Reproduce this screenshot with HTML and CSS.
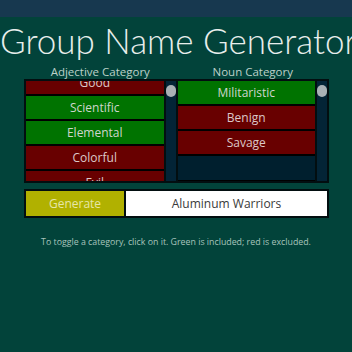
FILE: index.html
```html
<!DOCTYPE html>
<html lang="en-US">
<head>
<title>Group Name Generator</title>
<link rel="stylesheet" href="styles.css">
</head>
<body>
<div class="topbar"></div>

<h1 class="title">Group Name Generator</h1>

<div class="labels">
  <div class="label">Adjective Category</div>
  <div class="label">Noun Category</div>
</div>

<div class="panel">
  <div class="col">
    <div class="list">
      <div class="items scrolled">
        <div class="item off">Good</div>
        <div class="item on">Scientific</div>
        <div class="item on">Elemental</div>
        <div class="item off">Colorful</div>
        <div class="item off">Evil</div>
      </div>
    </div>
    <div class="bar"><div class="thumb"></div></div>
  </div>
  <div class="col">
    <div class="list">
      <div class="items">
        <div class="item on">Militaristic</div>
        <div class="item off">Benign</div>
        <div class="item off">Savage</div>
        <div class="item empty"></div>
      </div>
    </div>
    <div class="bar"><div class="thumb"></div></div>
  </div>
</div>

<div class="genrow">
  <button class="generate" type="button">Generate</button>
  <div class="result">Aluminum Warriors</div>
</div>

<p class="hint">To toggle a category, click on it. Green is included; red is excluded.</p>
</body>
</html>
```

FILE: styles.css
```css
body {
  margin: 0;
  background-color: #02433a;
  font-family: "Open Sans", sans-serif;
  color: #c9d9d2;
  width: 352px;
  height: 352px;
  overflow: hidden;
}
.topbar {
  height: 17px;
  background-color: #17384f;
}
.title {
  margin: 5px 0 0 0;
  font-family: Lato, "Open Sans", sans-serif;
  font-size: 35px;
  line-height: 37px;
  font-weight: 300;
  color: #e8eeec;
  text-align: center;
  white-space: nowrap;
}

.labels {
  display: flex;
  margin: 6px 0 0 24px;
  width: 305px;
}
.label {
  flex: 1;
  text-align: center;
  font-size: 11.5px;
  line-height: 14px;
  color: #bcd0c8;
}

.panel {
  display: flex;
  gap: 2px;
  margin: 0 0 0 24px;
  width: 305px;
  height: 104px;
  box-sizing: border-box;
  padding: 2px;
  background-color: #020e10;
}
.col {
  flex: 1;
  display: flex;
  gap: 2px;
}
.list {
  flex: 1;
  background-color: #001f2e;
  overflow: hidden;
}
.items.scrolled {
  margin-top: -10px;
}
.item {
  height: 23px;
  margin-bottom: 2px;
  line-height: 23px;
  text-align: center;
  font-size: 12px;
  color: #cfd6cc;
  outline: 1px solid #000;
}
.item.on { background-color: #007300; }
.item.off { background-color: #680000; color: #dcc8c8; }
.item.empty { background-color: #001f2e; height: 24px; }

.bar {
  width: 10px;
  background-color: #032436;
  position: relative;
}
.thumb {
  position: absolute;
  top: 4px;
  left: 0;
  width: 10px;
  height: 12px;
  border-radius: 5px;
  background-color: #a9b1b5;
}

.genrow {
  display: flex;
  gap: 2px;
  margin: 6px 0 0 24px;
  width: 305px;
  height: 29px;
  box-sizing: border-box;
  padding: 2px;
  background-color: #020e10;
}
.generate {
  width: 98px;
  border: none;
  margin: 0;
  padding: 0;
  background-color: #b1b100;
  color: #e6e6a8;
  font-family: "Open Sans", sans-serif;
  font-size: 12px;
}
.result {
  flex: 1;
  background-color: #fff;
  color: #3a3a3a;
  font-size: 12px;
  line-height: 25px;
  text-align: center;
}

.hint {
  margin: 18px 0 0 0;
  text-align: center;
  font-size: 8.8px;
  color: #a8c4bc;
}
```
